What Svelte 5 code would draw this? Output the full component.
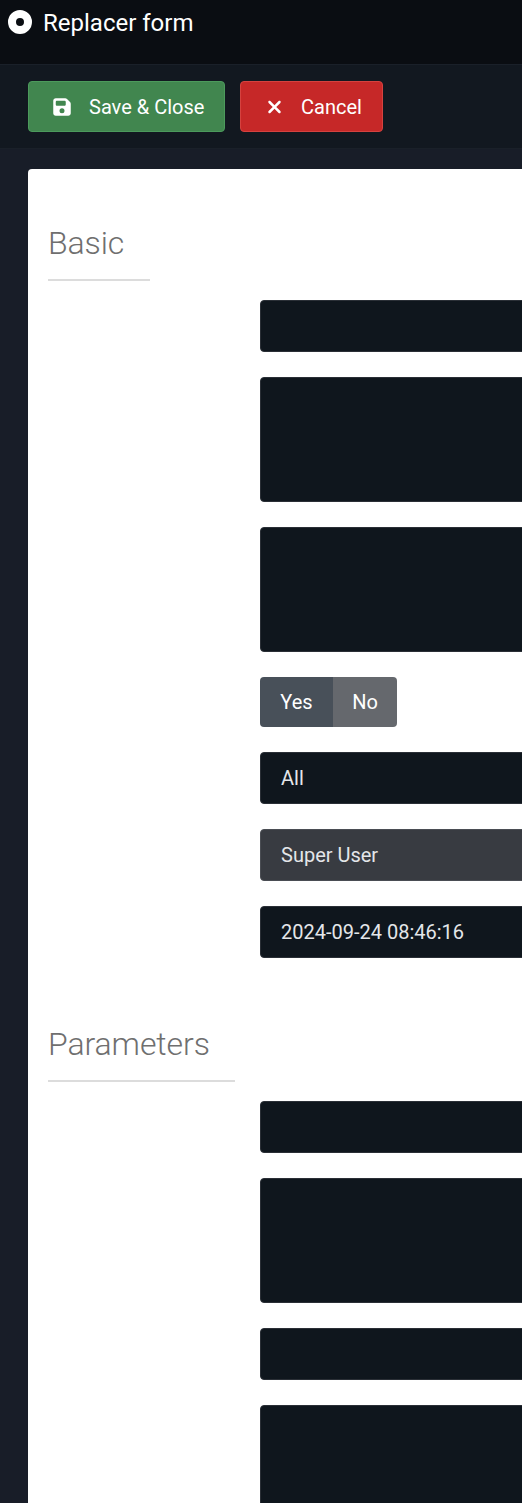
<script>
	const basic = [
		{ kind: 'input' },
		{ kind: 'area' },
		{ kind: 'area' },
		{ kind: 'toggle' },
		{ kind: 'input', text: 'All' },
		{ kind: 'input', text: 'Super User', disabled: true },
		{ kind: 'input', text: '2024-09-24 08:46:16' }
	];
	const parameters = [
		{ kind: 'input' },
		{ kind: 'area' },
		{ kind: 'input' },
		{ kind: 'area' }
	];
	const sections = [
		{ title: 'Basic', fields: basic },
		{ title: 'Parameters', fields: parameters }
	];
</script>

<div class="page">
	<header class="topbar">
		<span class="logo"></span>
		<h1>Replacer form</h1>
	</header>

	<div class="toolbar">
		<button class="btn save">
			<svg viewBox="0 0 448 512" width="18" height="20" aria-hidden="true">
				<path
					fill="currentColor"
					d="M64 32C28.7 32 0 60.7 0 96V416c0 35.3 28.7 64 64 64H384c35.3 0 64-28.7 64-64V173.3c0-17-6.7-33.3-18.7-45.3L352 50.7C340 38.7 323.700 32 306.700 32H64zm0 96c0-17.700 14.300-32 32-32H288c17.700 0 32 14.300 32 32v64c0 17.700-14.300 32-32 32H96c-17.700 0-32-14.300-32-32V128zM224 288a64 64 0 1 1 0 128 64 64 0 1 1 0-128z"
				/>
			</svg>
			Save &amp; Close
		</button>
		<button class="btn cancel">
			<svg viewBox="0 0 384 512" width="15" height="20" aria-hidden="true">
				<path
					fill="currentColor"
					d="M342.600 150.600c12.500-12.500 12.500-32.800 0-45.300s-32.800-12.500-45.300 0L192 210.700 86.600 105.400c-12.500-12.500-32.800-12.500-45.300 0s-12.500 32.800 0 45.300L146.700 256 41.400 361.400c-12.500 12.500-12.500 32.800 0 45.300s32.800 12.500 45.300 0L192 301.300 297.400 406.600c12.500 12.500 32.800 12.500 45.300 0s12.500-32.800 0-45.300L237.300 256 342.600 150.600z"
				/>
			</svg>
			Cancel
		</button>
	</div>

	<main class="card">
		{#each sections as section}
			<fieldset>
				<legend>{section.title}</legend>
				<div class="fields">
					{#each section.fields as field}
						{#if field.kind === 'toggle'}
							<div class="toggle">
								<span class="yes">Yes</span>
								<span class="no">No</span>
							</div>
						{:else}
							<div class="control {field.kind}" class:disabled={field.disabled}>{field.text ?? ''}</div>
						{/if}
					{/each}
				</div>
			</fieldset>
		{/each}
	</main>
</div>

<style>
	:global(body) {
		margin: 0;
		background: #181d28;
		overflow: hidden;
	}

	.page {
		height: 1503px;
		overflow: hidden;
		font-family: Roboto, 'Liberation Sans', sans-serif;
		background: #181d28;
	}

	.topbar {
		display: flex;
		align-items: flex-start;
		gap: 12px;
		box-sizing: border-box;
		height: 65px;
		padding: 8px 8px 0;
		background: #0a0d12;
		border-bottom: 1px solid #1a2029;
	}

	.logo {
		box-sizing: border-box;
		width: 24px;
		height: 24px;
		margin-top: 2px;
		border: 8px solid #fff;
		border-radius: 50%;
	}

	h1 {
		margin: -1px 0 0 -1px;
		font-size: 24px;
		line-height: 32px;
		font-weight: 400;
		color: #fff;
	}

	.toolbar {
		display: flex;
		gap: 15px;
		box-sizing: border-box;
		height: 84px;
		padding: 16px 28px 0;
		background: #121820;
		border-bottom: 1px solid #1a2029;
	}

	.btn {
		display: flex;
		align-items: center;
		box-sizing: border-box;
		height: 51px;
		padding: 0 16px 0 24px;
		border-radius: 4px;
		font-family: inherit;
		font-size: 20px;
		color: #fff;
		white-space: nowrap;
	}

	.btn svg {
		margin-right: 18px;
	}

	.save {
		width: 197px;
		background: #41864f;
		border: 1px solid #4c9a5c;
	}

	.cancel {
		width: 143px;
		padding-left: 26px;
		background: #c62828;
		border: 1px solid #d5423f;
	}

	.cancel svg {
		margin-right: 19px;
	}

	.card {
		box-sizing: border-box;
		width: 760px;
		margin: 20px 0 0 28px;
		padding: 52px 20px 0;
		background: #fff;
		border-radius: 4px 0 0 0;
	}

	fieldset {
		margin: 0 0 64px;
		padding: 0;
		border: 0;
		min-width: 0;
	}

	legend {
		box-sizing: border-box;
		display: block;
		width: max-content;
		margin: 0 0 19px;
		padding: 0 25.600px 14px 0;
		font-size: 32px;
		line-height: 44px;
		font-weight: 300;
		letter-spacing: -0.1px;
		color: #6f6f6f;
		border-bottom: 2px solid #dcdcdc;
	}

	.fields {
		display: flex;
		flex-direction: column;
		gap: 25px;
		padding-left: 212px;
	}

	.control {
		box-sizing: border-box;
		height: 52px;
		padding: 0 20px;
		line-height: 50px;
		font-size: 20px;
		color: #e4e6e9;
		background: #0f161d;
		border: 1px solid #2a2f36;
		border-radius: 4px;
	}

	.area {
		height: 125px;
	}

	.disabled {
		background: #383b41;
		border-color: #4a4d53;
	}

	.toggle {
		display: flex;
		width: 137px;
		height: 50px;
		border-radius: 4px;
		overflow: hidden;
		font-size: 20px;
		line-height: 50px;
		color: #fff;
		text-align: center;
	}

	.yes {
		width: 73px;
		background: #485059;
	}

	.no {
		flex: 1;
		background: #65686d;
	}
</style>
